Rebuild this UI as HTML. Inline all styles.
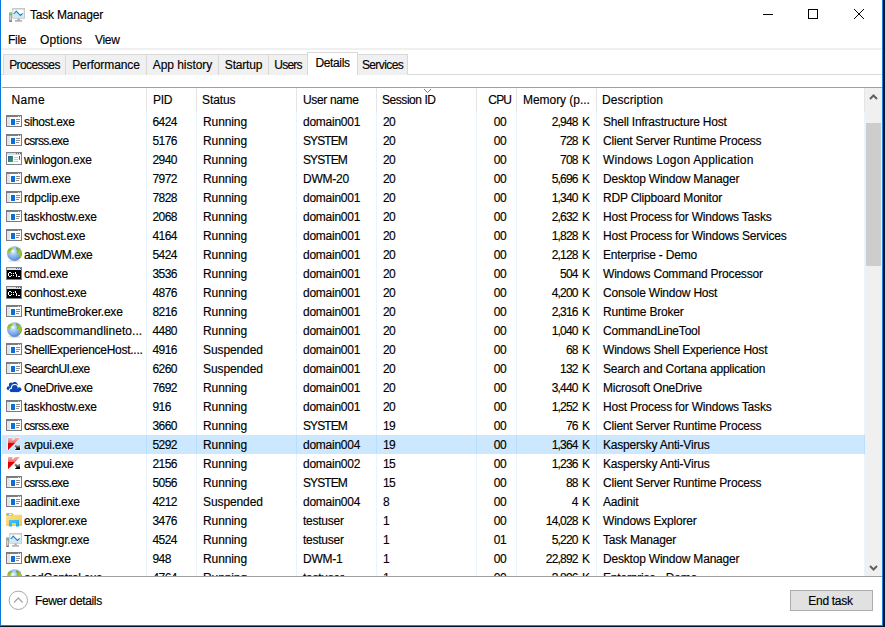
<!DOCTYPE html><html><head><meta charset="utf-8"><style>
*{margin:0;padding:0;box-sizing:border-box}
html,body{width:885px;height:627px;overflow:hidden;background:#fff}
body{position:relative;font-family:"Liberation Sans",sans-serif;font-size:12px;color:#000;-webkit-text-stroke:0.15px #000}
.a{position:absolute;white-space:nowrap}
.t{position:absolute;white-space:nowrap;line-height:14px}
.tab{position:absolute;top:54px;height:21px;background:#f0f0f0;border:1px solid #d9d9d9;border-bottom:none}
.hsep{position:absolute;top:88px;width:1px;height:24px;background:#e5e5e5}
.dsep{position:absolute;top:112px;width:1px;height:464px;background:rgba(0,110,230,0.08)}
.row{position:absolute;left:2px;width:863px;height:19px}
.row.sel{background:#cce8ff}
.row .t{top:3px}
.ic{position:absolute;left:4px}
.c1{left:22px;letter-spacing:-0.2px}
.c2{left:150.5px;letter-spacing:-0.6px}
.c3{left:201px;letter-spacing:-0.1px}
.c4{left:301px;letter-spacing:-0.25px}
.c5{left:381px;letter-spacing:-0.6px}
.c6{right:359px;letter-spacing:-0.6px}
.c7{right:275px;letter-spacing:-0.8px}
.k{letter-spacing:0;margin-left:4.3px}
.c8{left:601px;letter-spacing:-0.2px}
</style></head><body>

<svg width="0" height="0" style="position:absolute">
<defs>
<linearGradient id="gw" x1="0" y1="0" x2="1" y2="1"><stop offset="0" stop-color="#2a5aa8"/><stop offset="1" stop-color="#3aa84a"/></linearGradient>
<linearGradient id="gw2" x1="0" y1="0" x2="0" y2="1"><stop offset="0" stop-color="#2a5aa8"/><stop offset="1" stop-color="#3aa84a"/></linearGradient>
<linearGradient id="gc" x1="0" y1="0" x2="1" y2="1"><stop offset="0" stop-color="#5aa028"/><stop offset="0.5" stop-color="#a8cc18"/><stop offset="1" stop-color="#7ab020"/></linearGradient>
<radialGradient id="gg" cx="0.4" cy="0.35" r="0.7"><stop offset="0" stop-color="#ffffff"/><stop offset="0.22" stop-color="#b8d6f8"/><stop offset="0.75" stop-color="#6a9ce6"/><stop offset="1" stop-color="#4a7ad0"/></radialGradient>
<linearGradient id="gk" gradientUnits="userSpaceOnUse" x1="0" y1="2" x2="0" y2="14"><stop offset="0" stop-color="#f7b0b0"/><stop offset="0.38" stop-color="#ee6a6a"/><stop offset="0.42" stop-color="#e60000"/><stop offset="1" stop-color="#e00000"/></linearGradient>
<linearGradient id="gka" gradientUnits="userSpaceOnUse" x1="0" y1="8" x2="0" y2="14"><stop offset="0" stop-color="#b4b4b4"/><stop offset="0.45" stop-color="#707070"/><stop offset="0.8" stop-color="#000"/><stop offset="1" stop-color="#000"/></linearGradient>
<linearGradient id="gf" x1="0" y1="0" x2="1" y2="1"><stop offset="0" stop-color="#fde29a"/><stop offset="1" stop-color="#f5c842"/></linearGradient>
<linearGradient id="gb" x1="0" y1="0" x2="1" y2="1"><stop offset="0" stop-color="#4cc8f8"/><stop offset="1" stop-color="#10a8ea"/></linearGradient>
<g id="i-app" shape-rendering="crispEdges">
 <rect x="0" y="0" width="16" height="12" fill="#7a7d80"/>
 <rect x="1" y="2" width="14" height="9" fill="#ffffff"/>
 <rect x="1" y="2" width="3" height="9" fill="#e4e4e4"/>
 <rect x="12" y="1" width="1" height="1" fill="#d8d8d8"/><rect x="14" y="1" width="1" height="1" fill="#d8d8d8"/>
 <rect x="5" y="4" width="4" height="6" fill="#0a6fd8"/>
 <rect x="10" y="4" width="4" height="1" fill="#8a8a8a"/>
 <rect x="10" y="6" width="4" height="1" fill="#8a8a8a"/>
 <rect x="10" y="8" width="3" height="1" fill="#8a8a8a"/>
</g>
<g id="i-win" shape-rendering="crispEdges">
 <rect x="0" y="0" width="16" height="13" fill="#7f8388"/>
 <rect x="1" y="1" width="14" height="11" fill="#ffffff"/>
 <rect x="1" y="1" width="14" height="2" fill="#d9dee6"/>
 <rect x="10" y="1" width="1" height="1" fill="#4a6aa0"/><rect x="12" y="1" width="1" height="1" fill="#4a6aa0"/><rect x="14" y="1" width="1" height="1" fill="#4a6aa0"/>
 <rect x="2" y="4" width="5" height="6" fill="url(#gw)"/>
 <rect x="8" y="5" width="4" height="1" fill="#c8c8c8"/>
 <rect x="8" y="7" width="4" height="1" fill="#c8c8c8"/>
 <rect x="8" y="9" width="4" height="1" fill="#c8c8c8"/>
 <rect x="13" y="4" width="1" height="4" fill="url(#gw2)"/>
</g>
<g id="i-globe">
 <ellipse cx="8.5" cy="14.8" rx="6.5" ry="0.9" fill="#d0ccc0" opacity="0.7"/>
 <circle cx="8.5" cy="7.6" r="7.4" fill="url(#gg)"/>
 <path d="M1.3 5.2 C2 3.6 3.5 2.5 5 2.1 L7.1 2.3 C6.6 3.6 5.6 4.3 4.8 4.7 L4.3 6.6 L3.5 8 L2.6 6.8 Z" fill="url(#gc)"/>
 <path d="M10.3 1.2 C13 2 15.3 4.5 15.9 7.5 C15.8 9.4 14.9 10.9 13.2 12 L12.6 10.5 L13 8.6 L11.5 7.6 L10.5 6.3 L11.2 4.6 L10.2 3.2 Z" fill="url(#gc)"/>
</g>
<g id="i-cmd" shape-rendering="crispEdges">
 <rect x="0" y="0" width="16" height="13" fill="#7f8388"/>
 <rect x="1" y="1" width="14" height="2" fill="#dde3ea"/>
 <rect x="10" y="1" width="1" height="1" fill="#4a6aa0"/><rect x="12" y="1" width="1" height="1" fill="#4a6aa0"/><rect x="14" y="1" width="1" height="1" fill="#4a6aa0"/>
 <rect x="1" y="3" width="14" height="9" fill="#000"/>
 <g fill="#fff">
 <rect x="3" y="5" width="2" height="1"/><rect x="2" y="6" width="1" height="3"/><rect x="3" y="9" width="2" height="1"/><rect x="5" y="6" width="1" height="1"/><rect x="5" y="8" width="1" height="1"/>
 <rect x="7" y="6" width="1" height="1"/><rect x="7" y="8" width="1" height="1"/>
 <rect x="9" y="5" width="1" height="2"/><rect x="10" y="7" width="1" height="3"/>
 <rect x="12" y="9" width="2" height="1"/>
 </g>
</g>
<g id="i-cloud" fill="#0c47b7">
 <circle cx="2.7" cy="8.3" r="2"/>
 <circle cx="5.2" cy="4.9" r="2.4"/>
 <circle cx="8.6" cy="4.6" r="2.5"/>
 <path d="M8 2.1 C10 2 11.3 3.2 11.8 4.4 L11.8 7 L4 10.3 L2.7 10.3 Z"/>
 <g stroke="#fff" stroke-width="2">
  <circle cx="8.8" cy="7.8" r="2.9"/><circle cx="13.3" cy="9.3" r="2.1"/><circle cx="5.4" cy="10.4" r="1.7"/><rect x="5.4" y="9.3" width="7.9" height="2.8"/>
 </g>
 <circle cx="8.8" cy="7.8" r="2.9"/><circle cx="13.3" cy="9.3" r="2.1"/><circle cx="5.4" cy="10.4" r="1.7"/><rect x="5.4" y="9.3" width="7.9" height="2.8"/>
</g>
<g id="i-kav" stroke-linejoin="miter">
 <path d="M2 2 L6.5 2 L6.5 4.9 L9.3 2 L14 2 L2.2 14 L2 14 Z" fill="url(#gk)" stroke="#fff" stroke-width="1" paint-order="stroke"/>
 <path d="M8.2 9.9 L9.8 8.3 L11.6 10.1 L14 8.4 L14 14 L8.8 14 L10.5 12.2 Z" fill="url(#gka)" stroke="#fff" stroke-width="1" paint-order="stroke"/>
</g>
<g id="i-folder">
 <path d="M0 1 L6.5 1 L8 2.8 L16 2.8 L16 14 L0 14 Z" fill="url(#gf)"/>
 <rect x="0" y="1" width="7" height="3" fill="#f5c842"/>
 <rect x="1.5" y="2" width="4" height="1" fill="#fff"/>
 <circle cx="2" cy="2.5" r="0.8" fill="#1aa8ea"/>
 <path d="M3 14.5 L3 8 L13 8 L13 14.5 L10 14.5 L10 11 L6 11 L6 14.5 Z" fill="url(#gb)"/>
</g>
<g id="i-tm">
 <rect x="0.2" y="5.2" width="2.8" height="9.6" rx="0.8" fill="#8c8c8c"/>
 <rect x="0.8" y="5.8" width="1.6" height="8.4" fill="#d4d4d4"/>
 <rect x="0.6" y="6.6" width="2" height="1.6" fill="#34d234"/>
 <rect x="0.4" y="13.6" width="2.4" height="1.2" fill="#6a6a6a"/>
 <rect x="3.4" y="1" width="12.6" height="10.6" fill="#bcbcbc"/>
 <rect x="3.9" y="1.5" width="11.6" height="9.6" fill="#d6d6d6"/>
 <rect x="4.5" y="2.8" width="10" height="7.5" fill="#fff"/>
 <path d="M4.5 6.5 L5.5 6.3 L7.2 4.2 L11.4 8.5 L13.6 6.3 L14.5 6 L14.5 10.3 L4.5 10.3 Z" fill="#c6ecfa"/>
 <path d="M4.5 6.5 L5.5 6.3 L7.2 4.2 L11.4 8.5 L13.6 6.3" fill="none" stroke="#1f7fc8" stroke-width="1.1"/>
 <rect x="8.5" y="11.5" width="2.3" height="1.6" fill="#a8a8a8"/>
 <rect x="6" y="13" width="7" height="1.8" rx="0.5" fill="#b4b4b4"/>
</g>
</defs>
</svg>

<div class="a" style="left:0;top:0;width:1px;height:626px;background:#0a78d7"></div>
<div class="a" style="left:882px;top:0;width:1px;height:626px;background:#1a84dc"></div>
<div class="a" style="left:883px;top:0;width:2px;height:627px;background:#001329"></div>
<div class="a" style="left:0;top:625px;width:883px;height:1px;background:#1a84dc"></div>
<div class="a" style="left:0;top:626px;width:885px;height:1px;background:#001329"></div>
<svg class="a" style="left:9px;top:7px" width="17" height="15" viewBox="0 0 17 15"><use href="#i-tm"/></svg>
<div class="t" style="left:30px;top:8px;letter-spacing:-0.2px">Task Manager</div>
<div class="a" style="left:763px;top:14px;width:10px;height:1px;background:#000"></div>
<div class="a" style="left:808px;top:9px;width:10px;height:10px;border:1px solid #000"></div>
<svg class="a" style="left:853px;top:8px" width="12" height="12" viewBox="0 0 12 12"><path d="M1 1 L11 11 M11 1 L1 11" stroke="#000" stroke-width="1"/></svg>
<div class="t" style="left:8px;top:33px;letter-spacing:-0.3px">File</div>
<div class="t" style="left:40px;top:33px;letter-spacing:0.1px">Options</div>
<div class="t" style="left:95px;top:33px;letter-spacing:-0.3px">View</div>
<div class="a" style="left:1px;top:48px;width:881px;height:2px;background:#f0f0f0"></div>
<div class="a" style="left:1px;top:74px;width:881px;height:1px;background:#d9d9d9"></div>
<div class="tab" style="left:3px;width:63px"></div>
<div class="tab" style="left:65px;width:82px"></div>
<div class="tab" style="left:146px;width:73px"></div>
<div class="tab" style="left:218px;width:51px"></div>
<div class="tab" style="left:268px;width:40px"></div>
<div class="tab" style="left:357px;width:51px"></div>
<div class="t" style="left:3px;width:63px;top:58px;text-align:center;letter-spacing:-0.6px">Processes</div>
<div class="t" style="left:65px;width:82px;top:58px;text-align:center;letter-spacing:-0.1px">Performance</div>
<div class="t" style="left:146px;width:73px;top:58px;text-align:center;letter-spacing:-0.05px">App history</div>
<div class="t" style="left:218px;width:51px;top:58px;text-align:center;letter-spacing:-0.2px">Startup</div>
<div class="t" style="left:268px;width:40px;top:58px;text-align:center;letter-spacing:-0.8px">Users</div>
<div class="t" style="left:357px;width:51px;top:58px;text-align:center;letter-spacing:-0.6px">Services</div>
<div class="a" style="left:307px;top:52px;width:51px;height:23px;background:#fff;border:1px solid #d9d9d9;border-bottom:none"></div>
<div class="t" style="left:307px;width:51px;top:56px;text-align:center;letter-spacing:-0.35px">Details</div>
<div class="a" style="left:2px;top:87px;width:880px;height:1px;background:#a0a0a0"></div>
<div class="a" style="left:2px;top:576px;width:880px;height:1px;background:#a0a0a0"></div>
<div class="hsep" style="left:146px"></div>
<div class="hsep" style="left:196px"></div>
<div class="hsep" style="left:296px"></div>
<div class="hsep" style="left:376px"></div>
<div class="hsep" style="left:476px"></div>
<div class="hsep" style="left:516px"></div>
<div class="hsep" style="left:596px"></div>
<div class="hsep" style="left:864px"></div>
<div class="t" style="left:11.5px;top:93px;letter-spacing:0.35px">Name</div>
<div class="t" style="left:153px;top:93px;letter-spacing:-0.3px">PID</div>
<div class="t" style="left:202px;top:93px;letter-spacing:-0.1px">Status</div>
<div class="t" style="left:303px;top:93px;letter-spacing:-0.35px">User name</div>
<div class="t" style="left:382px;top:93px;letter-spacing:-0.45px">Session ID</div>
<div class="t" style="right:374px;top:93px;letter-spacing:-0.9px">CPU</div>
<div class="t" style="left:523px;top:93px;letter-spacing:-0.05px">Memory (p...</div>
<div class="t" style="left:602px;top:93px;letter-spacing:0.08px">Description</div>
<svg class="a" style="left:423px;top:88px" width="9" height="6" viewBox="0 0 9 6"><path d="M1 1 L4.5 4.5 L8 1" fill="none" stroke="#808080" stroke-width="1"/></svg>
<div class="a" style="left:0;top:112px;width:865px;height:464px;overflow:hidden">
<div class="row" style="top:0px">
<svg class="ic" style="top:3px" width="16" height="13" viewBox="0 0 16 13"><use href="#i-app"/></svg>
<div class="t c1" style="letter-spacing:-0.35px">sihost.exe</div><div class="t c2">6424</div><div class="t c3">Running</div><div class="t c4">domain001</div><div class="t c5">20</div><div class="t c6">00</div><div class="t c7">2,948<span class="k">K</span></div><div class="t c8">Shell Infrastructure Host</div>
</div>
<div class="row" style="top:19px">
<svg class="ic" style="top:3px" width="16" height="13" viewBox="0 0 16 13"><use href="#i-app"/></svg>
<div class="t c1" style="letter-spacing:-0.7px">csrss.exe</div><div class="t c2">5176</div><div class="t c3">Running</div><div class="t c4" style="letter-spacing:-0.9px">SYSTEM</div><div class="t c5">20</div><div class="t c6">00</div><div class="t c7">728<span class="k">K</span></div><div class="t c8">Client Server Runtime Process</div>
</div>
<div class="row" style="top:38px">
<svg class="ic" style="top:2px" width="16" height="14" viewBox="0 0 16 14"><use href="#i-win"/></svg>
<div class="t c1">winlogon.exe</div><div class="t c2">2940</div><div class="t c3">Running</div><div class="t c4" style="letter-spacing:-0.9px">SYSTEM</div><div class="t c5">20</div><div class="t c6">00</div><div class="t c7">708<span class="k">K</span></div><div class="t c8" style="letter-spacing:0.15px">Windows Logon Application</div>
</div>
<div class="row" style="top:57px">
<svg class="ic" style="top:3px" width="16" height="13" viewBox="0 0 16 13"><use href="#i-app"/></svg>
<div class="t c1">dwm.exe</div><div class="t c2">7972</div><div class="t c3">Running</div><div class="t c4">DWM-20</div><div class="t c5">20</div><div class="t c6">00</div><div class="t c7">5,696<span class="k">K</span></div><div class="t c8">Desktop Window Manager</div>
</div>
<div class="row" style="top:76px">
<svg class="ic" style="top:3px" width="16" height="13" viewBox="0 0 16 13"><use href="#i-app"/></svg>
<div class="t c1">rdpclip.exe</div><div class="t c2">7828</div><div class="t c3">Running</div><div class="t c4">domain001</div><div class="t c5">20</div><div class="t c6">00</div><div class="t c7">1,340<span class="k">K</span></div><div class="t c8">RDP Clipboard Monitor</div>
</div>
<div class="row" style="top:95px">
<svg class="ic" style="top:3px" width="16" height="13" viewBox="0 0 16 13"><use href="#i-app"/></svg>
<div class="t c1">taskhostw.exe</div><div class="t c2">2068</div><div class="t c3">Running</div><div class="t c4">domain001</div><div class="t c5">20</div><div class="t c6">00</div><div class="t c7">2,632<span class="k">K</span></div><div class="t c8">Host Process for Windows Tasks</div>
</div>
<div class="row" style="top:114px">
<svg class="ic" style="top:3px" width="16" height="13" viewBox="0 0 16 13"><use href="#i-app"/></svg>
<div class="t c1">svchost.exe</div><div class="t c2">4164</div><div class="t c3">Running</div><div class="t c4">domain001</div><div class="t c5">20</div><div class="t c6">00</div><div class="t c7">1,828<span class="k">K</span></div><div class="t c8">Host Process for Windows Services</div>
</div>
<div class="row" style="top:133px">
<svg class="ic" style="top:1px" width="17" height="17" viewBox="0 0 17 17"><use href="#i-globe"/></svg>
<div class="t c1" style="letter-spacing:-0.45px">aadDWM.exe</div><div class="t c2">5424</div><div class="t c3">Running</div><div class="t c4">domain001</div><div class="t c5">20</div><div class="t c6">00</div><div class="t c7">2,128<span class="k">K</span></div><div class="t c8">Enterprise - Demo</div>
</div>
<div class="row" style="top:152px">
<svg class="ic" style="top:3px" width="16" height="14" viewBox="0 0 16 14"><use href="#i-cmd"/></svg>
<div class="t c1">cmd.exe</div><div class="t c2">3536</div><div class="t c3">Running</div><div class="t c4">domain001</div><div class="t c5">20</div><div class="t c6">00</div><div class="t c7">504<span class="k">K</span></div><div class="t c8">Windows Command Processor</div>
</div>
<div class="row" style="top:171px">
<svg class="ic" style="top:3px" width="16" height="14" viewBox="0 0 16 14"><use href="#i-cmd"/></svg>
<div class="t c1">conhost.exe</div><div class="t c2">4876</div><div class="t c3">Running</div><div class="t c4">domain001</div><div class="t c5">20</div><div class="t c6">00</div><div class="t c7">4,200<span class="k">K</span></div><div class="t c8">Console Window Host</div>
</div>
<div class="row" style="top:190px">
<svg class="ic" style="top:3px" width="16" height="13" viewBox="0 0 16 13"><use href="#i-app"/></svg>
<div class="t c1">RuntimeBroker.exe</div><div class="t c2">8216</div><div class="t c3">Running</div><div class="t c4">domain001</div><div class="t c5">20</div><div class="t c6">00</div><div class="t c7">2,316<span class="k">K</span></div><div class="t c8">Runtime Broker</div>
</div>
<div class="row" style="top:209px">
<svg class="ic" style="top:1px" width="17" height="17" viewBox="0 0 17 17"><use href="#i-globe"/></svg>
<div class="t c1" style="letter-spacing:0.04px">aadscommandlineto...</div><div class="t c2">4480</div><div class="t c3">Running</div><div class="t c4">domain001</div><div class="t c5">20</div><div class="t c6">00</div><div class="t c7">1,040<span class="k">K</span></div><div class="t c8">CommandLineTool</div>
</div>
<div class="row" style="top:228px">
<svg class="ic" style="top:3px" width="16" height="13" viewBox="0 0 16 13"><use href="#i-app"/></svg>
<div class="t c1" style="letter-spacing:-0.27px">ShellExperienceHost....</div><div class="t c2">4916</div><div class="t c3">Suspended</div><div class="t c4">domain001</div><div class="t c5">20</div><div class="t c6">00</div><div class="t c7">68<span class="k">K</span></div><div class="t c8">Windows Shell Experience Host</div>
</div>
<div class="row" style="top:247px">
<svg class="ic" style="top:3px" width="16" height="13" viewBox="0 0 16 13"><use href="#i-app"/></svg>
<div class="t c1" style="letter-spacing:-0.6px">SearchUI.exe</div><div class="t c2">6260</div><div class="t c3">Suspended</div><div class="t c4">domain001</div><div class="t c5">20</div><div class="t c6">00</div><div class="t c7">132<span class="k">K</span></div><div class="t c8">Search and Cortana application</div>
</div>
<div class="row" style="top:266px">
<svg class="ic" style="top:2px" width="16" height="13" viewBox="0 0 16 13"><use href="#i-cloud"/></svg>
<div class="t c1" style="letter-spacing:-0.4px">OneDrive.exe</div><div class="t c2">7692</div><div class="t c3">Running</div><div class="t c4">domain001</div><div class="t c5">20</div><div class="t c6">00</div><div class="t c7">3,440<span class="k">K</span></div><div class="t c8">Microsoft OneDrive</div>
</div>
<div class="row" style="top:285px">
<svg class="ic" style="top:3px" width="16" height="13" viewBox="0 0 16 13"><use href="#i-app"/></svg>
<div class="t c1">taskhostw.exe</div><div class="t c2">916</div><div class="t c3">Running</div><div class="t c4">domain001</div><div class="t c5">20</div><div class="t c6">00</div><div class="t c7">1,252<span class="k">K</span></div><div class="t c8">Host Process for Windows Tasks</div>
</div>
<div class="row" style="top:304px">
<svg class="ic" style="top:3px" width="16" height="13" viewBox="0 0 16 13"><use href="#i-app"/></svg>
<div class="t c1" style="letter-spacing:-0.7px">csrss.exe</div><div class="t c2">3660</div><div class="t c3">Running</div><div class="t c4" style="letter-spacing:-0.9px">SYSTEM</div><div class="t c5">19</div><div class="t c6">00</div><div class="t c7">76<span class="k">K</span></div><div class="t c8">Client Server Runtime Process</div>
</div>
<div class="row sel" style="top:323px">
<svg class="ic" style="top:1px" width="16" height="16" viewBox="0 0 16 16"><use href="#i-kav"/></svg>
<div class="t c1">avpui.exe</div><div class="t c2">5292</div><div class="t c3">Running</div><div class="t c4">domain004</div><div class="t c5">19</div><div class="t c6">00</div><div class="t c7">1,364<span class="k">K</span></div><div class="t c8">Kaspersky Anti-Virus</div>
</div>
<div class="row" style="top:342px">
<svg class="ic" style="top:1px" width="16" height="16" viewBox="0 0 16 16"><use href="#i-kav"/></svg>
<div class="t c1">avpui.exe</div><div class="t c2">2156</div><div class="t c3">Running</div><div class="t c4">domain002</div><div class="t c5">15</div><div class="t c6">00</div><div class="t c7">1,236<span class="k">K</span></div><div class="t c8">Kaspersky Anti-Virus</div>
</div>
<div class="row" style="top:361px">
<svg class="ic" style="top:3px" width="16" height="13" viewBox="0 0 16 13"><use href="#i-app"/></svg>
<div class="t c1" style="letter-spacing:-0.7px">csrss.exe</div><div class="t c2">5056</div><div class="t c3">Running</div><div class="t c4" style="letter-spacing:-0.9px">SYSTEM</div><div class="t c5">15</div><div class="t c6">00</div><div class="t c7">88<span class="k">K</span></div><div class="t c8">Client Server Runtime Process</div>
</div>
<div class="row" style="top:380px">
<svg class="ic" style="top:3px" width="16" height="13" viewBox="0 0 16 13"><use href="#i-app"/></svg>
<div class="t c1">aadinit.exe</div><div class="t c2">4212</div><div class="t c3">Suspended</div><div class="t c4">domain004</div><div class="t c5">8</div><div class="t c6">00</div><div class="t c7">4<span class="k">K</span></div><div class="t c8">Aadinit</div>
</div>
<div class="row" style="top:399px">
<svg class="ic" style="top:1px" width="16" height="15" viewBox="0 0 16 15"><use href="#i-folder"/></svg>
<div class="t c1">explorer.exe</div><div class="t c2">3476</div><div class="t c3">Running</div><div class="t c4">testuser</div><div class="t c5">1</div><div class="t c6">00</div><div class="t c7">14,028<span class="k">K</span></div><div class="t c8">Windows Explorer</div>
</div>
<div class="row" style="top:418px">
<svg class="ic" style="top:2px" width="17" height="15" viewBox="0 0 17 15"><use href="#i-tm"/></svg>
<div class="t c1">Taskmgr.exe</div><div class="t c2">4524</div><div class="t c3">Running</div><div class="t c4">testuser</div><div class="t c5">1</div><div class="t c6">01</div><div class="t c7">5,220<span class="k">K</span></div><div class="t c8">Task Manager</div>
</div>
<div class="row" style="top:437px">
<svg class="ic" style="top:3px" width="16" height="13" viewBox="0 0 16 13"><use href="#i-app"/></svg>
<div class="t c1">dwm.exe</div><div class="t c2">948</div><div class="t c3">Running</div><div class="t c4">DWM-1</div><div class="t c5">1</div><div class="t c6">00</div><div class="t c7">22,892<span class="k">K</span></div><div class="t c8">Desktop Window Manager</div>
</div>
<div class="row" style="top:456px">
<svg class="ic" style="top:1px" width="17" height="17" viewBox="0 0 17 17"><use href="#i-globe"/></svg>
<div class="t c1">aadControl.exe</div><div class="t c2">4764</div><div class="t c3">Running</div><div class="t c4">testuser</div><div class="t c5">1</div><div class="t c6">00</div><div class="t c7">3,896<span class="k">K</span></div><div class="t c8">Enterprise - Demo</div>
</div>
</div>
<div class="dsep" style="left:146px"></div>
<div class="dsep" style="left:196px"></div>
<div class="dsep" style="left:296px"></div>
<div class="dsep" style="left:376px"></div>
<div class="dsep" style="left:476px"></div>
<div class="dsep" style="left:516px"></div>
<div class="dsep" style="left:596px"></div>
<div class="dsep" style="left:864px"></div>
<div class="a" style="left:865px;top:88px;width:17px;height:488px;background:#f0f0f0"></div>
<div class="a" style="left:866px;top:123px;width:15px;height:143px;background:#cdcdcd"></div>
<svg class="a" style="left:869px;top:93px" width="9" height="8" viewBox="0 0 9 8"><path d="M1 6 L4.5 2.5 L8 6" fill="none" stroke="#606060" stroke-width="2"/></svg>
<svg class="a" style="left:869px;top:564px" width="9" height="8" viewBox="0 0 9 8"><path d="M1 2 L4.5 5.5 L8 2" fill="none" stroke="#606060" stroke-width="2"/></svg>
<svg class="a" style="left:8px;top:590px" width="21" height="21" viewBox="0 0 21 21"><circle cx="10.3" cy="10.3" r="9.2" fill="none" stroke="#a8a8a8" stroke-width="1"/><path d="M6 12.5 L10.3 8 L14.6 12.5" fill="none" stroke="#a8a8a8" stroke-width="1.3"/></svg>
<div class="t" style="left:35px;top:594px;letter-spacing:-0.35px">Fewer details</div>
<div class="a" style="left:790px;top:590px;width:83px;height:21px;background:#e1e1e1;border:1px solid #adadad"></div>
<div class="t" style="left:789px;width:83px;top:594px;text-align:center;letter-spacing:-0.3px">End task</div>
</body></html>
